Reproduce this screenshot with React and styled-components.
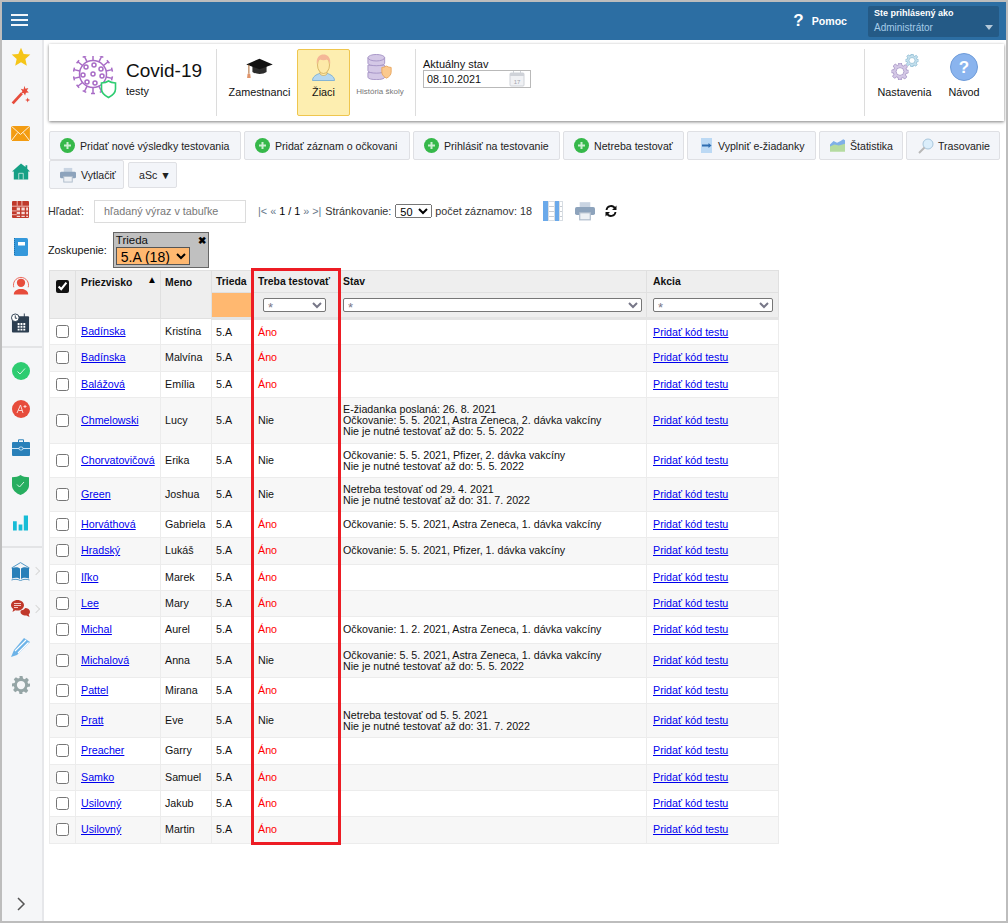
import React from "react";
import styled, { createGlobalStyle } from "styled-components";

const GlobalStyle = createGlobalStyle`
  html, body { margin: 0; padding: 0; background: #fff; }
  body { font-family: "Liberation Sans", Arial, sans-serif; font-size: 10.8px; color: #111; }
  * { box-sizing: border-box; }
`;

const Frame = styled.div`
  width: 1008px;
  height: 923px;
  border: 2px solid #bdbdbd;
  display: flex;
  flex-direction: column;
  overflow: hidden;
`;
const TopBar = styled.header`
  height: 38px;
  flex: none;
  background: #2c6ea3;
  display: flex;
  align-items: center;
  padding: 0 7px 0 9px;
  color: #fff;
`;
const Burger = styled.div`
  width: 17px;
  height: 12px;
  margin-top: -2px;
  border-top: 2px solid #f2f6fa;
  border-bottom: 2px solid #f2f6fa;
  position: relative;
  &::after {
    content: "";
    position: absolute;
    left: 0;
    right: 0;
    top: 3px;
    height: 2px;
    background: #f2f6fa;
  }
`;
const Help = styled.div`
  margin-left: auto;
  display: flex;
  align-items: center;
  font-weight: bold;
  font-size: 10.6px;
  gap: 8px;
`;
const HelpMark = styled.span`
  font-size: 17px;
  font-weight: bold;
`;
const UserBox = styled.div`
  width: 131px;
  height: 31px;
  margin-left: 21px;
  background: #245a86;
  border-radius: 2px;
  padding: 1px 6px;
  position: relative;
  font-size: 10px;
  line-height: 13px;
`;
const UserTitle = styled.div`
  font-weight: bold;
  font-size: 9px;
  color: #fff;
  margin-bottom: 1px;
`;
const UserRole = styled.div`
  color: #a5cbe8;
`;
const UserCaret = styled.span`
  position: absolute;
  right: 6px;
  bottom: 7px;
  border: 4px solid transparent;
  border-top: 5px solid #b4c8d8;
  border-bottom: 0;
`;

const Body = styled.div`
  flex: 1;
  display: flex;
  min-height: 0;
`;
const Sidebar = styled.nav`
  width: 42px;
  flex: none;
  background: #f5f6f8;
  border-right: 2px solid #e6e7ea;
  display: flex;
  flex-direction: column;
`;
const SideItem = styled.div`
  height: 38px;
  flex: none;
  display: flex;
  align-items: center;
  justify-content: center;
  padding: 0 3px 4px 0;
  position: relative;
`;
const SideSep = styled.div`
  height: 2px;
  flex: none;
  background: #e3e4e6;
  margin: 2px 0 6px;
`;
const SideMore = styled.span`
  position: absolute;
  right: 3px;
  top: 50%;
  width: 6px;
  height: 6px;
  margin-top: -5px;
  border-top: 1.5px solid #d8d8d8;
  border-right: 1.5px solid #d8d8d8;
  transform: rotate(45deg);
`;
const SideExpand = styled.div`
  margin-top: auto;
  height: 34px;
  display: flex;
  align-items: center;
  justify-content: center;
  padding-right: 3px;
`;

const Main = styled.main`
  flex: 1;
  min-width: 0;
  padding: 4px 0 0 5px;
`;
const Panel = styled.section`
  width: 955px;
  height: 77px;
  background: #fff;
  box-shadow: 0 1px 3px rgba(0, 0, 0, 0.5);
  display: flex;
  padding: 5px 0;
`;
const Brand = styled.div`
  width: 168px;
  flex: none;
  display: flex;
  padding: 7px 0 0 24px;
  gap: 9px;
  border-right: 1px solid #dcdcdc;
`;
const BrandTitle = styled.div`
  font-size: 19px;
  line-height: 24px;
  margin-top: 3px;
`;
const BrandSub = styled.div`
  margin-top: 2px;
`;
const Tiles = styled.div`
  display: flex;
  flex: none;
  padding: 0 7px;
  gap: 2px;
  border-right: 1px solid #dcdcdc;
`;
const Tile = styled.div`
  width: ${(p) => p.$w}px;
  height: 67px;
  flex: none;
  display: flex;
  flex-direction: column;
  align-items: center;
  border: 1px solid ${(p) => (p.$on ? "#efc64e" : "transparent")};
  background: ${(p) => (p.$on ? "#fdeeb0" : "transparent")};
  border-radius: 2px;
  white-space: nowrap;
  font-size: ${(p) => (p.$small ? 8 : 10.8)}px;
  color: ${(p) => (p.$small ? "#777" : "#111")};
`;
const TileIcon = styled.div`
  height: 32px;
  margin-top: 1px;
  display: flex;
  align-items: center;
`;
const TileLabel = styled.div`
  height: 16px;
  line-height: 16px;
  margin-top: 1px;
`;
const DateBlock = styled.div`
  width: 449px;
  flex: none;
  padding: 9px 0 0 7px;
  border-right: 1px solid #dcdcdc;
  line-height: 12px;
  font-size: 11px;
`;
const DateField = styled.div`
  width: 108px;
  height: 18px;
  border: 1px solid #b9b9b9;
  display: flex;
  align-items: center;
  justify-content: space-between;
  padding: 0 5px 0 3px;
  font-size: 10.8px;
`;
const ButtonRow = styled.div`
  display: flex;
  flex-wrap: wrap;
  align-items: center;
  width: 955px;
  padding-top: 10px;
  gap: 0 3px;
`;
const ToolButton = styled.button`
  width: ${(p) => p.$w}px;
  height: ${(p) => p.$h || 29}px;
  margin-left: ${(p) => p.$ml || 0}px;
  font: 10.6px "Liberation Sans", sans-serif;
  color: #222;
  background: #f3f5f9;
  border: 1px solid #dfe0e4;
  border-radius: 2px;
  padding: 0 0 0 ${(p) => p.$lead ?? 10}px;
  display: flex;
  align-items: center;
  gap: ${(p) => p.$gap ?? 5}px;
  white-space: nowrap;
`;
const SearchRow = styled.div`
  display: flex;
  align-items: center;
  height: 22px;
  margin: 11px 0 0 -1px;
  color: #333;
`;
const SearchInput = styled.div`
  width: 152px;
  height: 23px;
  margin-left: 10px;
  border: 1px solid #dcdcdc;
  color: #777;
  padding: 0 9px;
  line-height: 21px;
  white-space: nowrap;
`;
const Pager = styled.div`
  margin-left: ${(p) => p.$ml}px;
  white-space: nowrap;
  display: flex;
  align-items: center;
`;
const PagerArrows = styled.span`
  color: #66788a;
  margin: 0 3px 0 0;
  & ~ & {
    margin: 0 0 0 3px;
  }
`;
const PageNumber = styled.span`
  color: #000;
`;
const PageInfo = styled.span`
  margin-left: ${(p) => p.$ml || 0}px;
`;
const PageSize = styled.select`
  width: 37px;
  height: 14px;
  margin: 0 3px 0 4px;
  font: 11px "Liberation Sans", sans-serif;
  padding: 0;
`;
const GroupRow = styled.div`
  display: flex;
  align-items: center;
  margin: 10px 0 2px -1px;
  gap: 6px;
`;
const GroupBox = styled.div`
  width: 96px;
  height: 36px;
  background: #c0c0c0;
  border: 1px solid #666;
  padding: 1px 2px;
  position: relative;
  line-height: 13px;
  font-size: 11.5px;
`;
const GroupClose = styled.span`
  position: absolute;
  right: 2px;
  top: 1px;
  font-size: 10px;
  font-weight: bold;
  color: #000;
`;
const GroupSelect = styled.select`
  display: block;
  width: 74px;
  height: 18px;
  background: #ffb870;
  border: 1px solid #555;
  border-radius: 0;
  font: 14px "Liberation Sans", sans-serif;
  padding: 0;
`;
const TableWrap = styled.div`
  position: relative;
  width: 729px;
`;
const RedMark = styled.div`
  position: absolute;
  left: 202px;
  top: -2px;
  width: 90px;
  height: 577px;
  border: 3px solid #ed1c24;
  pointer-events: none;
`;
const Table = styled.table`
  width: 729px;
  table-layout: fixed;
  border-collapse: collapse;
  font-size: 10.7px;
  tbody td:nth-child(3),
  tbody td:nth-child(4),
  tbody td:nth-child(6),
  thead tr:first-child th:nth-child(3),
  thead tr:first-child th:nth-child(4),
  thead tr:first-child th:nth-child(6) {
    padding-left: 4px;
  }
  tbody td:nth-child(7),
  thead tr:first-child th:nth-child(7) {
    padding-left: 6px;
  }
`;
const Th = styled.th`
  height: 22px;
  background: #eeeeee;
  border: 1px solid #e0e0e0;
  text-align: left;
  vertical-align: ${(p) => (p.$top ? "top" : "middle")};
  padding: ${(p) => (p.$top ? "6px" : "0")} 0 0 5px;
  font-weight: bold;
  font-size: 10.4px;
  position: relative;
`;
const CheckTh = styled(Th)`
  padding: 9px 0 0 6px;
`;
const FilterTh = styled(Th)`
  height: 26px;
  padding: 0 4px 1px;
  background: ${(p) => p.$bg || "#eeeeee"};
  border-bottom: 3px solid #e4e4e4;
`;
const SortMark = styled.span`
  position: absolute;
  right: 3px;
  top: 3px;
  font-size: 10px;
  color: #000;
`;
const Filter = styled.select`
  display: block;
  width: ${(p) => p.$w || "100%"};
  height: 14px;
  font: 13px "Liberation Sans", sans-serif;
  color: #778;
  background: #fff;
  border: 1px solid #767676;
  border-radius: 2px;
  padding: 0;
  margin-left: ${(p) => p.$ml || 0}px;
`;
const Row = styled.tr`
  height: ${(p) => p.$h}px;
  background: ${(p) => (p.$alt ? "#f7f7f7" : "#fff")};
  & > td {
    padding-bottom: ${(p) => (p.$h === 27 ? 1 : 0)}px;
  }
`;
const Td = styled.td`
  border: 1px solid #ececec;
  padding: 0 0 0 5px;
  line-height: 11px;
  color: ${(p) => p.$color || "inherit"};
  white-space: nowrap;
`;
const CheckCell = styled(Td)`
  text-align: center;
  padding: 0;
`;
const Check = styled.input`
  margin: 0;
  width: 13px;
  height: 13px;
  vertical-align: middle;
  accent-color: #111;
`;
const StudentLink = styled.a`
  color: #0000ee;
  text-decoration: underline;
`;

const Star = () => (
  <svg width="20" height="20" viewBox="0 0 24 24"><path fill="#f5c518" d="M12 1l3.200 7.400 8 .7-6 5.300 1.800 8L12 18.200 5 22.400l1.800-8-6-5.300 8-.7z" /></svg>
);
const Wand = () => (
  <svg width="20" height="20" viewBox="0 0 24 24">
    <path stroke="#e74c3c" strokeWidth="3.400" d="M2 22L13 10" />
    <path fill="#e74c3c" d="M16 1l1.300 3.400 3.500-.8-1.800 3 2.400 2.400-3.500.2-1 3.400-1.800-3-3.400.6 2-2.800-2-2.800 3.400.7zM20 15l.8 2.200 2.200.8-2.200.8-.8 2.200-.8-2.200-2.200-.8 2.200-.8z" />
  </svg>
);
const Mail = () => (
  <svg width="19" height="15" viewBox="0 0 20 16">
    <rect width="20" height="16" fill="#f39c12" />
    <path d="M0 0l10 9 10-9M0 16l7-9M20 16l-7-9" fill="none" stroke="#fff" strokeWidth=".9" />
  </svg>
);
const Home = () => (
  <svg width="18" height="19" viewBox="0 0 20 20">
    <path fill="#16a085" d="M10 1l5 4V3h2v4l3 3h-2v9H2v-9H0z" />
    <path fill="none" stroke="#bfe5dc" d="M7.500 19v-7h5v7" />
  </svg>
);
const GridIcon = () => (
  <svg width="17" height="17" viewBox="0 0 18 18">
    <rect width="18" height="18" rx="1" fill="#c0392b" />
    <path fill="#f6dcd9" d="M5 7h3.500v3H5zM10 7h3.500v3H10zM15 7h2v3h-2zM5 11.500h3.500V14H5zM10 11.500h3.500V14H10zM15 11.500h2V14h-2zM5 15.500h3.500V17H5zM10 15.500h3.500V17H10zM15 15.500h2V17h-2z" />
    <path stroke="#f0c0bb" d="M0 5.500h18M0 10.500h5M0 14.500h5M5.500 0v5M10.500 0v5" />
  </svg>
);
const Notebook = () => (
  <svg width="14" height="18" viewBox="0 0 14 18">
    <rect width="14" height="18" rx="1.500" fill="#3498db" />
    <rect x="4" y="4" width="7" height="3.500" fill="#fff" />
    <path stroke="#1f6fa8" strokeDasharray="1 1" d="M.5 0v18" />
  </svg>
);
const Agent = () => (
  <svg width="18" height="19" viewBox="0 0 20 20">
    <circle cx="10" cy="7" r="4.600" fill="#e74c3c" />
    <path fill="#e74c3c" d="M2 20c0-3.500 3-5 6-6h4c3 1 6 2.500 6 6z" />
    <path fill="none" stroke="#e74c3c" strokeWidth=".9" d="M2 12A8.500 8.500 0 0 1 10 1a8.500 8.500 0 0 1 8 11" />
  </svg>
);
const Calendar = () => (
  <svg width="19" height="20" viewBox="0 0 20 20">
    <rect x="1" y="3" width="18" height="17" rx="1" fill="#2c3e50" />
    <path fill="#fff" d="M7 10h2v2H7zM10 10h2v2h-2zM13 10h2v2h-2zM7 13h2v2H7zM10 13h2v2h-2zM13 13h2v2h-2zM7 16h2v2H7zM10 16h2v2h-2zM13 16h2v2h-2z" />
    <circle cx="4.500" cy="4.500" r="4" fill="#fff" stroke="#2c3e50" />
    <path stroke="#2c3e50" d="M4.500 2v3h2M14 0v4" fill="none" />
  </svg>
);
const CheckBadge = () => (
  <svg width="18" height="18" viewBox="0 0 18 18">
    <circle cx="9" cy="9" r="9" fill="#2ecc71" />
    <path d="M5.500 9.500l2.500 2.500 5-5.500" fill="none" stroke="#d5f5e3" />
  </svg>
);
const GradeBadge = () => (
  <svg width="18" height="18" viewBox="0 0 18 18">
    <circle cx="9" cy="9" r="9" fill="#e74c3c" />
    <path d="M5 13l3.500-8 2.500 8M6.300 10.500h3.900M11.500 6.500h3M13 5v3" fill="none" stroke="#fbd9d5" />
  </svg>
);
const Briefcase = () => (
  <svg width="18" height="17" viewBox="0 0 18 17">
    <path fill="none" stroke="#2980b9" d="M6.500 3V.8h5V3" />
    <rect y="3" width="18" height="14" rx="1" fill="#2980b9" />
    <path stroke="#cfe5f4" d="M0 9.500h7M11 9.500h7" />
    <rect x="7" y="8" width="4" height="3" rx="1.500" fill="none" stroke="#cfe5f4" />
  </svg>
);
const Shield = () => (
  <svg width="17" height="20" viewBox="0 0 17 20">
    <path fill="#27ae60" d="M8.500 0c2 1.500 5 2.200 8.500 2.200v8c0 4.500-4 8-8.500 9.800C4 18.200 0 14.700 0 10.200v-8C3.500 2.200 6.500 1.500 8.500 0z" />
    <path d="M5 9.500l2.500 2.500 4.500-5" fill="none" stroke="#d5f5e3" />
  </svg>
);
const Bars = () => (
  <svg width="15" height="16" viewBox="0 0 16 16"><path fill="#17bcd6" d="M0 6h4v10H0zM6 9.500h4V16H6zM11.500 0H16v16h-4.500z" /></svg>
);
const Book = () => (
  <svg width="19" height="19" viewBox="0 0 19 19">
    <path fill="#2980b9" d="M1 6c3-1 6-1 8 .5V17c-2-1.500-5-1.500-8-.5zM18 6c-3-1-6-1-8 .5V17c2-1.500 5-1.500 8-.5z" />
    <path fill="none" stroke="#2980b9" strokeWidth=".8" d="M.5 6L9.500.6 18.500 6M.5 18c3-1 6-1 9 .6 3-1.600 6-1.600 9-.6" />
  </svg>
);
const Chat = () => (
  <svg width="19" height="18" viewBox="0 0 19 18">
    <path fill="#c0392b" d="M6.500 0C10 0 13 2.300 13 5.300s-3 5.300-6.500 5.300c-.8 0-1.500-.1-2.200-.3L1.500 12l.8-3C.8 8 0 6.700 0 5.300 0 2.300 3 0 6.500 0z" />
    <path fill="#c0392b" d="M14 8c2.800 0 5 1.500 5 3.700 0 1-.5 2-1.300 2.700l.8 2.600-3-1.500c-3 .3-6-1.200-6-3.500 0-.5.100-1 .4-1.400C12.500 10 13.700 9 14 8z" />
    <path stroke="#f3c9c4" d="M3 3.500h7M3 5.500h7M3 7.500h4" />
  </svg>
);
const Pencil = () => (
  <svg width="19" height="19" viewBox="0 0 19 19">
    <path fill="#6db3e8" d="M13 0l6 4L6 17l-6 2 3-7z" />
    <path stroke="#fff" strokeWidth="1.200" d="M4 13L15 2M7 15L17.500 4.500" fill="none" />
  </svg>
);
const Gear = ({ size = 18, fill = "#95a5a6", hole = "#f5f6f8", stroke }) => (
  <svg width={size} height={size} viewBox="0 0 24 24">
    <path
      fill={fill}
      stroke={stroke}
      d="M10 0h4l.7 3.400 2.100.9 2.900-1.900 2.800 2.800-1.900 2.900.9 2.100L24 10v4l-3.400.7-.9 2.100 1.900 2.900-2.800 2.800-2.900-1.900-2.100.9L14 24h-4l-.7-3.400-2.100-.9-2.900 1.900-2.800-2.800 1.900-2.900-.9-2.100L0 14v-4l3.400-.7.9-2.100-1.900-2.900 2.800-2.800 2.900 1.900 2.100-.9z"
    />
    <circle cx="12" cy="12" r="5.500" fill={hole} stroke={stroke} />
  </svg>
);
const spikes = [0, 26, 51, 77, 103, 129, 154, 180, 206, 231, 257, 283, 309, 334];
const Virus = () => (
  <svg width="44" height="44" viewBox="0 0 44 44">
    <g stroke="#a86cc6" strokeWidth="1.500" fill="none">
      <circle cx="20" cy="18" r="13.500" />
      {spikes.map((a) => (
        <path key={a} transform={`rotate(${a} 20 18)`} d="M20 4.500V-1.500M18 -1.500h4" />
      ))}
      <circle cx="13" cy="11" r="2" />
      <circle cx="21" cy="9" r="2" />
      <circle cx="28" cy="13" r="2" />
      <circle cx="10" cy="19" r="2" />
      <circle cx="20" cy="18" r="2" />
      <circle cx="29" cy="20" r="2" />
      <circle cx="14" cy="26" r="2" />
      <circle cx="22" cy="27" r="2" />
    </g>
    <path fill="#fff" stroke="#2ecc71" strokeWidth="1.600" d="M35.500 25c2 1.300 4 1.800 7 2v6c0 4-3 6.500-7 8.500-4-2-7-4.500-7-8.500v-6c3-.2 5-.7 7-2z" />
  </svg>
);
const GradCap = () => (
  <svg width="27" height="23" viewBox="0 0 30 26">
    <path fill="#2c2c2c" d="M7 11h16v7c-4 3-12 3-16 0z" />
    <path fill="#111" d="M15 3l15 6.500L15 15 0 9.500z" />
    <path stroke="#b0703c" strokeWidth="1.200" d="M3 10v10" />
    <path fill="#e0946a" d="M1.500 20h3l.5 5H1z" />
  </svg>
);
const Student = () => (
  <svg width="23" height="27" viewBox="0 0 23 27">
    <path fill="#b5d7ef" stroke="#6fa8d4" strokeWidth=".8" d="M.5 26.500c0-4 4-6 7-7h8c3 1 7 3 7 7z" />
    <path fill="#fde9a8" stroke="#c9a24e" strokeWidth=".7" d="M8 16v4c2 2 5 2 7 0v-4z" />
    <ellipse cx="11.500" cy="11" rx="6" ry="8.500" fill="#fde9a8" stroke="#c9a24e" strokeWidth=".7" />
    <path fill="#f5b797" d="M5 11C3.500 3 8 .5 11.500 .5S19.500 3 18 11c-.5-3-1.500-5-3-5.500-2 1-5 1-7 0-1.500.5-2.500 2.500-3 5.500z" />
  </svg>
);
const History = () => (
  <svg width="26" height="26" viewBox="0 0 28 28">
    <g fill="#d4c8e6" stroke="#a594c6">
      <path d="M1 20v5c0 3.500 18 3.500 18 0v-5z" />
      <path d="M1 12v6c0 3.500 18 3.500 18 0v-6z" />
      <path d="M1 4v6c0 3.500 18 3.500 18 0V4z" />
      <ellipse cx="10" cy="4" rx="9" ry="3.500" />
    </g>
    <path fill="#fbc98e" stroke="#e8a860" d="M21 13c1.500 1 3 1.300 5 1.500v5c0 3-2 5-5 6.500-3-1.500-5-3.500-5-6.500v-5c2-.2 3.500-.5 5-1.500z" />
  </svg>
);
const HelpBall = () => (
  <svg width="28" height="28" viewBox="0 0 28 28">
    <circle cx="14" cy="14" r="13.500" fill="#8ab4ee" stroke="#6e9bd8" />
    <text x="14" y="20" textAnchor="middle" fontFamily="Liberation Sans" fontWeight="bold" fontSize="17" fill="#fff">?</text>
  </svg>
);
const Cogs = () => (
  <svg width="30" height="28" viewBox="0 0 30 28">
    <g transform="translate(1.500 10)"><Gear size={17} fill="#d4c8e6" hole="#fff" stroke="#9a86bd" /></g>
    <g transform="translate(15.500 1)"><Gear size={13} fill="#c4e0ee" hole="#fff" stroke="#6ea8c4" /></g>
  </svg>
);
const CalIcon = () => (
  <svg width="16" height="16" viewBox="0 0 16 16">
    <rect x="1" y="2" width="14" height="13" rx="1" fill="#f0f1f4" stroke="#cfd2d8" />
    <path fill="#cfd2d8" d="M1 2h14v3H1zM4 0h1v3H4zM11 0h1v3h-1z" />
    <text x="8" y="13" fontSize="6" textAnchor="middle" fill="#a0a4ac" fontFamily="Liberation Sans">17</text>
  </svg>
);
const PlusBall = () => (
  <svg width="15" height="15" viewBox="0 0 15 15">
    <circle cx="7.500" cy="7.500" r="7.500" fill="#36b84a" />
    <path d="M7.500 4v7M4 7.500h7" stroke="#cdeed2" strokeWidth="2" />
  </svg>
);
const Export = () => (
  <svg width="13" height="15" viewBox="0 0 13 15">
    <rect x="1" width="11" height="15" fill="#bcd9f4" />
    <path d="M2 7.500h7" stroke="#2f6db0" strokeWidth="2" />
    <path d="M8.500 5l3 2.500-3 2.500z" fill="#2f6db0" />
  </svg>
);
const StatIcon = () => (
  <svg width="15" height="13" viewBox="0 0 17 14">
    <path fill="#7fb0e8" d="M0 6l4-4 4 2 4-2 3-2 2 1v8H0z" />
    <path fill="#b5dba0" d="M0 8l5-2 5 1 7-2v9H0z" />
  </svg>
);
const Loupe = () => (
  <svg width="16" height="16" viewBox="0 0 16 16">
    <circle cx="10" cy="6" r="5" fill="#dbeefb" stroke="#a8c6dc" />
    <path d="M6.500 9.500L1 15" stroke="#b8b8b8" strokeWidth="2" />
  </svg>
);
const Printer = ({ size = 16 }) => (
  <svg width={size} height={size} viewBox="0 0 17 17">
    <rect x="4" y="1" width="9" height="5" fill="#c9d4e2" />
    <rect y="5" width="17" height="7" rx="1.500" fill="#8da3bc" />
    <rect x="4" y="10" width="9" height="6" fill="#eef1f5" stroke="#aebccb" />
  </svg>
);
const Columns = () => (
  <svg width="20" height="20" viewBox="0 0 20 20">
    <rect width="20" height="20" fill="#d7dde3" />
    <path fill="#6aa9ea" d="M0 0h5v20H0zM12 0h4v20h-4z" />
    <path fill="#fff" d="M6 1h5v18H6zM17 1h2v18h-2z" />
    <path stroke="#c8cdd3" d="M6 5.500h5M6 10.500h5M6 15.500h5M17 5.500h2M17 10.500h2M17 15.500h2" />
  </svg>
);
const Refresh = () => (
  <svg width="12" height="12" viewBox="0 0 12 12" fill="none" stroke="#111" strokeWidth="1.800">
    <path d="M1.500 5A4.500 4.500 0 0 1 10 3.500M10.500 7A4.500 4.500 0 0 1 2 8.500" />
    <path fill="#111" strokeWidth="0" d="M11.500 .5v4.500H7zM.5 11.500V7H5z" />
  </svg>
);

const people = [
  ["Badínska", "Kristína", "Áno", [], 26],
  ["Badínska", "Malvína", "Áno", [], 27],
  ["Balážová", "Emília", "Áno", [], 26],
  ["Chmelowski", "Lucy", "Nie", ["E-žiadanka poslaná: 26. 8. 2021", "Očkovanie: 5. 5. 2021, Astra Zeneca, 2. dávka vakcíny", "Nie je nutné testovať až do: 5. 5. 2022"], 46],
  ["Chorvatovičová", "Erika", "Nie", ["Očkovanie: 5. 5. 2021, Pfizer, 2. dávka vakcíny", "Nie je nutné testovať až do: 5. 5. 2022"], 34],
  ["Green", "Joshua", "Nie", ["Netreba testovať od 29. 4. 2021", "Nie je nutné testovať až do: 31. 7. 2022"], 34],
  ["Horváthová", "Gabriela", "Áno", ["Očkovanie: 5. 5. 2021, Astra Zeneca, 1. dávka vakcíny"], 26],
  ["Hradský", "Lukáš", "Áno", ["Očkovanie: 5. 5. 2021, Pfizer, 1. dávka vakcíny"], 27],
  ["Iľko", "Marek", "Áno", [], 26],
  ["Lee", "Mary", "Áno", [], 26],
  ["Michal", "Aurel", "Áno", ["Očkovanie: 1. 2. 2021, Astra Zeneca, 1. dávka vakcíny"], 27],
  ["Michalová", "Anna", "Nie", ["Očkovanie: 5. 5. 2021, Astra Zeneca, 1. dávka vakcíny", "Nie je nutné testovať až do: 5. 5. 2022"], 34],
  ["Pattel", "Mirana", "Áno", [], 26],
  ["Pratt", "Eve", "Nie", ["Netreba testovať od 5. 5. 2021", "Nie je nutné testovať až do: 31. 7. 2022"], 34],
  ["Preacher", "Garry", "Áno", [], 27],
  ["Samko", "Samuel", "Áno", [], 26],
  ["Usilovný", "Jakub", "Áno", [], 26],
  ["Usilovný", "Martin", "Áno", [], 27],
];

const App = () => {
  return (
    <Frame>
      <GlobalStyle />
      <TopBar>
        <Burger />
        <Help>
          <HelpMark>?</HelpMark>
          Pomoc
        </Help>
        <UserBox>
          <UserTitle>Ste prihlásený ako</UserTitle>
          <UserRole>Administrátor</UserRole>
          <UserCaret />
        </UserBox>
      </TopBar>
      <Body>
        <Sidebar>
          <SideItem><Star /></SideItem>
          <SideItem><Wand /></SideItem>
          <SideItem><Mail /></SideItem>
          <SideItem><Home /></SideItem>
          <SideItem><GridIcon /></SideItem>
          <SideItem><Notebook /></SideItem>
          <SideItem><Agent /></SideItem>
          <SideItem><Calendar /></SideItem>
          <SideSep />
          <SideItem><CheckBadge /></SideItem>
          <SideItem><GradeBadge /></SideItem>
          <SideItem><Briefcase /></SideItem>
          <SideItem><Shield /></SideItem>
          <SideItem><Bars /></SideItem>
          <SideSep />
          <SideItem><Book /><SideMore /></SideItem>
          <SideItem><Chat /><SideMore /></SideItem>
          <SideItem><Pencil /></SideItem>
          <SideItem><Gear /></SideItem>
          <SideExpand>
            <svg width="10" height="16" viewBox="0 0 10 16" fill="none" stroke="#555" strokeWidth="1.500"><path d="M2 2l6 6-6 6" /></svg>
          </SideExpand>
        </Sidebar>
        <Main>
          <Panel>
            <Brand>
              <Virus />
              <div>
                <BrandTitle>Covid-19</BrandTitle>
                <BrandSub>testy</BrandSub>
              </div>
            </Brand>
            <Tiles>
              <Tile $w={71}>
                <TileIcon><GradCap /></TileIcon>
                <TileLabel>Zamestnanci</TileLabel>
              </Tile>
              <Tile $w={53} $on>
                <TileIcon><Student /></TileIcon>
                <TileLabel>Žiaci</TileLabel>
              </Tile>
              <Tile $w={56} $small>
                <TileIcon><History /></TileIcon>
                <TileLabel>História školy</TileLabel>
              </Tile>
            </Tiles>
            <DateBlock>
              Aktuálny stav
              <DateField>
                08.10.2021
                <CalIcon />
              </DateField>
            </DateBlock>
            <Tile $w={79}>
              <TileIcon><Cogs /></TileIcon>
              <TileLabel>Nastavenia</TileLabel>
            </Tile>
            <Tile $w={40}>
              <TileIcon><HelpBall /></TileIcon>
              <TileLabel>Návod</TileLabel>
            </Tile>
          </Panel>
          <ButtonRow>
            <ToolButton $w={192}><PlusBall />Pridať nové výsledky testovania</ToolButton>
            <ToolButton $w={166}><PlusBall />Pridať záznam o očkovani</ToolButton>
            <ToolButton $w={147}><PlusBall />Prihlásiť na testovanie</ToolButton>
            <ToolButton $w={121}><PlusBall />Netreba testovať</ToolButton>
            <ToolButton $w={129} $lead={12} $gap={5}><Export />Vyplniť e-žiadanky</ToolButton>
            <ToolButton $w={84}><StatIcon />Štatistika</ToolButton>
            <ToolButton $w={94} $lead={11} $gap={4}><Loupe />Trasovanie</ToolButton>
            <ToolButton $w={75}><Printer />Vytlačiť</ToolButton>
            <ToolButton $w={49} $h={26} $ml={1} $gap={3}>aSc ▼</ToolButton>
          </ButtonRow>
          <SearchRow>
            Hľadať:
            <SearchInput>hľadaný výraz v tabuľke</SearchInput>
            <Pager $ml={12}>
              <PagerArrows>|&lt; «</PagerArrows>
              <PageNumber>1 / 1</PageNumber>
              <PagerArrows>» &gt;|</PagerArrows>
              <PageInfo $ml={4}>Stránkovanie:</PageInfo>
              <PageSize defaultValue="50"><option>50</option></PageSize>
              počet záznamov: 18
            </Pager>
            <Pager $ml={11}><Columns /></Pager>
            <Pager $ml={12}><Printer size={20} /></Pager>
            <Pager $ml={10}><Refresh /></Pager>
          </SearchRow>
          <GroupRow>
            Zoskupenie:
            <GroupBox>
              Trieda
              <GroupClose>✖</GroupClose>
              <GroupSelect><option>5.A (18)</option></GroupSelect>
            </GroupBox>
          </GroupRow>
          <TableWrap>
            <Table>
              <colgroup>
                <col width="26" />
                <col width="85" />
                <col width="51" />
                <col width="41" />
                <col width="86" />
                <col width="308" />
                <col width="132" />
              </colgroup>
              <thead>
                <tr>
                  <CheckTh rowSpan={2} $top><Check type="checkbox" defaultChecked /></CheckTh>
                  <Th rowSpan={2} $top>Priezvisko<SortMark>▲</SortMark></Th>
                  <Th rowSpan={2} $top>Meno</Th>
                  <Th>Trieda</Th>
                  <Th>Treba testovať</Th>
                  <Th>Stav</Th>
                  <Th>Akcia</Th>
                </tr>
                <tr>
                  <FilterTh $bg="#ffb870" />
                  <FilterTh><Filter $w="63px" $ml={6}><option>*</option></Filter></FilterTh>
                  <FilterTh><Filter><option>*</option></Filter></FilterTh>
                  <FilterTh><Filter $w="120px" $ml={2}><option>*</option></Filter></FilterTh>
                </tr>
              </thead>
              <tbody>
                {people.map((p, i) => (
                  <Row key={i} $h={p[4]} $alt={i % 2 === 1}>
                    <CheckCell><Check type="checkbox" /></CheckCell>
                    <Td><StudentLink href="#">{p[0]}</StudentLink></Td>
                    <Td>{p[1]}</Td>
                    <Td>5.A</Td>
                    <Td $color={p[2] === "Áno" ? "#f00" : undefined}>{p[2]}</Td>
                    <Td>{p[3].map((line) => <div key={line}>{line}</div>)}</Td>
                    <Td><StudentLink href="#">Pridať kód testu</StudentLink></Td>
                  </Row>
                ))}
              </tbody>
            </Table>
            <RedMark />
          </TableWrap>
        </Main>
      </Body>
    </Frame>
  );
};

export default App;
